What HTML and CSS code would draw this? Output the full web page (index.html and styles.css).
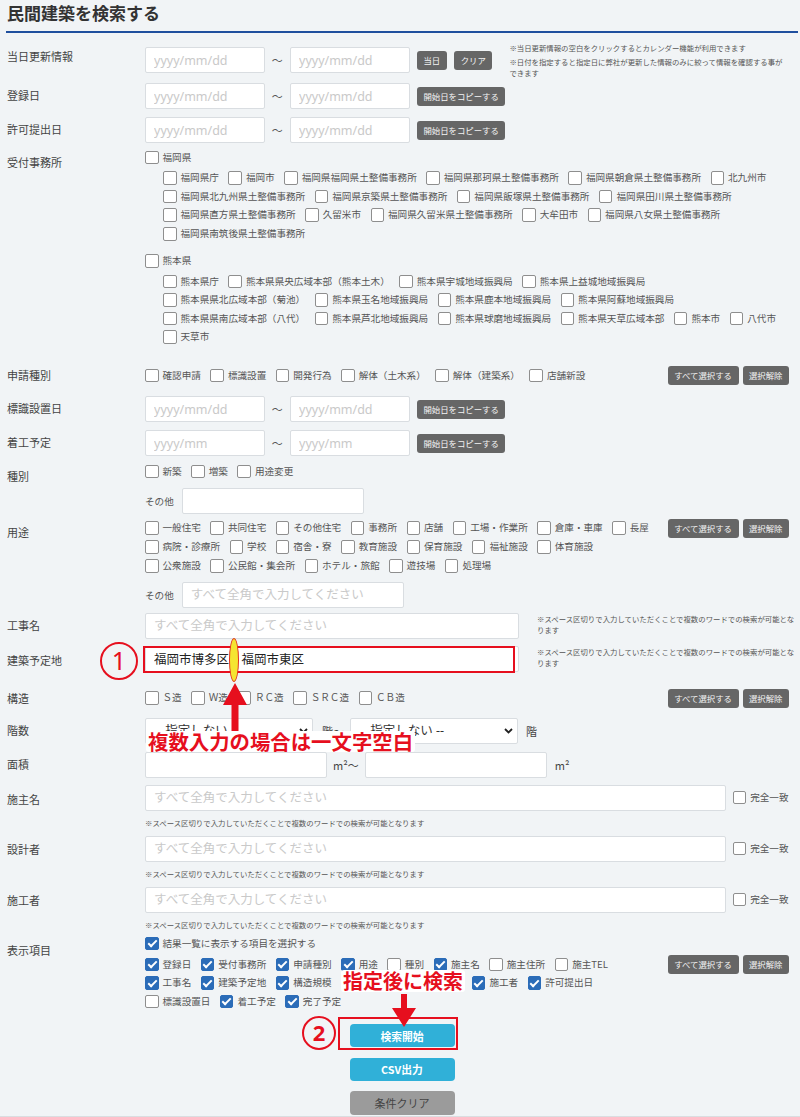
FILE: index.html
```html
<!DOCTYPE html>
<html lang="ja">
<head>
  <meta charset="UTF-8">
  <title>民間建築を検索する</title>
  <link rel="stylesheet" href="styles.css">
</head>
<body>
<div class="page">
  <h1 class="page-title">民間建築を検索する</h1>

  <!-- 当日更新情報 -->
  <div class="row mt-9">
    <div class="lbl pt-2">当日更新情報</div>
    <div class="field">
      <div class="dates mt-5">
        <input class="txt date" placeholder="yyyy/mm/dd">
        <span class="tilde">～</span>
        <input class="txt date" placeholder="yyyy/mm/dd">
        <button class="btn-s">当日</button>
        <button class="btn-s">クリア</button>
      </div>
      <div class="note-top">
        <p>※当日更新情報の空白をクリックするとカレンダー機能が利用できます</p>
        <p>※日付を指定すると指定日に弊社が更新した情報のみに絞って情報を確認する事ができます</p>
      </div>
    </div>
  </div>

  <div class="row mt-5h">
    <div class="lbl">登録日</div>
    <div class="field">
      <div class="dates">
        <input class="txt date" placeholder="yyyy/mm/dd">
        <span class="tilde">～</span>
        <input class="txt date" placeholder="yyyy/mm/dd">
        <button class="btn-s">開始日をコピーする</button>
      </div>
    </div>
  </div>

  <div class="row mt-8">
    <div class="lbl">許可提出日</div>
    <div class="field">
      <div class="dates">
        <input class="txt date" placeholder="yyyy/mm/dd">
        <span class="tilde">～</span>
        <input class="txt date" placeholder="yyyy/mm/dd">
        <button class="btn-s">開始日をコピーする</button>
      </div>
    </div>
  </div>

  <!-- 受付事務所 -->
  <div class="row mt-5h">
    <div class="lbl pt-1h">受付事務所</div>
    <div class="field col">
      <div class="pref">
        <div class="pref-head"><label class="cb"><input type="checkbox">福岡県</label></div>
        <div class="pref-list">
          <label class="cb"><input type="checkbox">福岡県庁</label>
          <label class="cb"><input type="checkbox">福岡市</label>
          <label class="cb"><input type="checkbox">福岡県福岡県土整備事務所</label>
          <label class="cb"><input type="checkbox">福岡県那珂県土整備事務所</label>
          <label class="cb"><input type="checkbox">福岡県朝倉県土整備事務所</label>
          <label class="cb"><input type="checkbox">北九州市</label>
          <label class="cb"><input type="checkbox">福岡県北九州県土整備事務所</label>
          <label class="cb"><input type="checkbox">福岡県京築県土整備事務所</label>
          <label class="cb"><input type="checkbox">福岡県飯塚県土整備事務所</label>
          <label class="cb"><input type="checkbox">福岡県田川県土整備事務所</label>
          <label class="cb"><input type="checkbox">福岡県直方県土整備事務所</label>
          <label class="cb"><input type="checkbox">久留米市</label>
          <label class="cb"><input type="checkbox">福岡県久留米県土整備事務所</label>
          <label class="cb"><input type="checkbox">大牟田市</label>
          <label class="cb"><input type="checkbox">福岡県八女県土整備事務所</label>
          <label class="cb"><input type="checkbox">福岡県南筑後県土整備事務所</label>
        </div>
      </div>
      <div class="pref">
        <div class="pref-head"><label class="cb"><input type="checkbox">熊本県</label></div>
        <div class="pref-list">
          <label class="cb"><input type="checkbox">熊本県庁</label>
          <label class="cb"><input type="checkbox">熊本県県央広域本部（熊本土木）</label>
          <label class="cb"><input type="checkbox">熊本県宇城地域振興局</label>
          <label class="cb"><input type="checkbox">熊本県上益城地域振興局</label>
          <label class="cb"><input type="checkbox">熊本県県北広域本部（菊池）</label>
          <label class="cb"><input type="checkbox">熊本県玉名地域振興局</label>
          <label class="cb"><input type="checkbox">熊本県鹿本地域振興局</label>
          <label class="cb"><input type="checkbox">熊本県阿蘇地域振興局</label>
          <label class="cb"><input type="checkbox">熊本県県南広域本部（八代）</label>
          <label class="cb"><input type="checkbox">熊本県芦北地域振興局</label>
          <label class="cb"><input type="checkbox">熊本県球磨地域振興局</label>
          <label class="cb"><input type="checkbox">熊本県天草広域本部</label>
          <label class="cb"><input type="checkbox">熊本市</label>
          <label class="cb"><input type="checkbox">八代市</label>
          <label class="cb"><input type="checkbox">天草市</label>
        </div>
      </div>
    </div>
  </div>

  <!-- 申請種別 -->
  <div class="row mt-19h">
    <div class="lbl short">申請種別</div>
    <div class="field center">
      <div class="cbs">
        <label class="cb"><input type="checkbox">確認申請</label>
        <label class="cb"><input type="checkbox">標識設置</label>
        <label class="cb"><input type="checkbox">開発行為</label>
        <label class="cb"><input type="checkbox">解体（土木系）</label>
        <label class="cb"><input type="checkbox">解体（建築系）</label>
        <label class="cb"><input type="checkbox">店舗新設</label>
      </div>
      <div class="btns">
        <button class="btn-s">すべて選択する</button>
        <button class="btn-s">選択解除</button>
      </div>
    </div>
  </div>

  <div class="row mt-11">
    <div class="lbl">標識設置日</div>
    <div class="field">
      <div class="dates">
        <input class="txt date" placeholder="yyyy/mm/dd">
        <span class="tilde">～</span>
        <input class="txt date" placeholder="yyyy/mm/dd">
        <button class="btn-s">開始日をコピーする</button>
      </div>
    </div>
  </div>

  <div class="row mt-8">
    <div class="lbl">着工予定</div>
    <div class="field">
      <div class="dates">
        <input class="txt date" placeholder="yyyy/mm">
        <span class="tilde">～</span>
        <input class="txt date" placeholder="yyyy/mm">
        <button class="btn-s">開始日をコピーする</button>
      </div>
    </div>
  </div>

  <!-- 種別 -->
  <div class="row mt-6">
    <div class="lbl pt-2">種別</div>
    <div class="field col">
      <div class="cbs">
        <label class="cb"><input type="checkbox">新築</label>
        <label class="cb"><input type="checkbox">増築</label>
        <label class="cb"><input type="checkbox">用途変更</label>
      </div>
      <div class="other mt-7">
        <span>その他</span>
        <input class="txt other-s">
      </div>
    </div>
  </div>

  <!-- 用途 -->
  <div class="row mt-5">
    <div class="lbl pt-1">用途</div>
    <div class="field col">
      <div class="split">
        <div class="cbs tall">
          <label class="cb"><input type="checkbox">一般住宅</label>
          <label class="cb"><input type="checkbox">共同住宅</label>
          <label class="cb"><input type="checkbox">その他住宅</label>
          <label class="cb"><input type="checkbox">事務所</label>
          <label class="cb"><input type="checkbox">店舗</label>
          <label class="cb"><input type="checkbox">工場・作業所</label>
          <label class="cb"><input type="checkbox">倉庫・車庫</label>
          <label class="cb"><input type="checkbox">長屋</label>
          <label class="cb"><input type="checkbox">病院・診療所</label>
          <label class="cb"><input type="checkbox">学校</label>
          <label class="cb"><input type="checkbox">宿舎・寮</label>
          <label class="cb"><input type="checkbox">教育施設</label>
          <label class="cb"><input type="checkbox">保育施設</label>
          <label class="cb"><input type="checkbox">福祉施設</label>
          <label class="cb"><input type="checkbox">体育施設</label>
          <label class="cb"><input type="checkbox">公衆施設</label>
          <label class="cb"><input type="checkbox">公民館・集会所</label>
          <label class="cb"><input type="checkbox">ホテル・旅館</label>
          <label class="cb"><input type="checkbox">遊技場</label>
          <label class="cb"><input type="checkbox">処理場</label>
        </div>
        <div class="btns">
          <button class="btn-s">すべて選択する</button>
          <button class="btn-s">選択解除</button>
        </div>
      </div>
      <div class="other mt-6">
        <span>その他</span>
        <input class="txt other-l" placeholder="すべて全角で入力してください">
      </div>
    </div>
  </div>

  <!-- 工事名 / 建築予定地 -->
  <div class="row mt-5">
    <div class="lbl">工事名</div>
    <div class="field">
      <input class="txt wide" placeholder="すべて全角で入力してください">
      <p class="note-side">※スペース区切りで入力していただくことで複数のワードでの検索が可能となります</p>
    </div>
  </div>

  <div class="row mt-7">
    <div class="lbl pt-2">建築予定地</div>
    <div class="field">
      <input class="txt wide" value="福岡市博多区　福岡市東区" placeholder="すべて全角で入力してください">
      <p class="note-side">※スペース区切りで入力していただくことで複数のワードでの検索が可能となります</p>
    </div>
  </div>

  <!-- 構造 -->
  <div class="row mt-15">
    <div class="lbl short">構造</div>
    <div class="field center">
      <div class="cbs">
        <label class="cb"><input type="checkbox">Ｓ造</label>
        <label class="cb"><input type="checkbox">Ｗ造</label>
        <label class="cb"><input type="checkbox">ＲＣ造</label>
        <label class="cb"><input type="checkbox">ＳＲＣ造</label>
        <label class="cb"><input type="checkbox">ＣＢ造</label>
      </div>
      <div class="btns">
        <button class="btn-s">すべて選択する</button>
        <button class="btn-s">選択解除</button>
      </div>
    </div>
  </div>

  <!-- 階数 -->
  <div class="row mt-10">
    <div class="lbl">階数</div>
    <div class="field center">
      <div class="sel">
        <select><option>-- 指定しない --</option></select>
        <svg width="9" height="6" viewBox="0 0 9 6"><polyline points="1,1 4.5,4.5 8,1" fill="none" stroke="#222" stroke-width="1.8"/></svg>
      </div>
      <span class="unit u-floor">階～</span>
      <div class="sel">
        <select><option>-- 指定しない --</option></select>
        <svg width="9" height="6" viewBox="0 0 9 6"><polyline points="1,1 4.5,4.5 8,1" fill="none" stroke="#222" stroke-width="1.8"/></svg>
      </div>
      <span class="unit u-end">階</span>
    </div>
  </div>

  <!-- 面積 -->
  <div class="row mt-8">
    <div class="lbl">面積</div>
    <div class="field center">
      <input class="txt area">
      <span class="unit u-area">m²～</span>
      <input class="txt area">
      <span class="unit u-end">m²</span>
    </div>
  </div>

  <!-- 施主名 / 設計者 / 施工者 -->
  <div class="row mt-7">
    <div class="lbl pt-2">施主名</div>
    <div class="field col">
      <div class="line">
        <input class="txt full" placeholder="すべて全角で入力してください">
        <label class="cb exact"><input type="checkbox">完全一致</label>
      </div>
      <p class="note-under">※スペース区切りで入力していただくことで複数のワードでの検索が可能となります</p>
    </div>
  </div>

  <div class="row mt-7h">
    <div class="lbl pt-1">設計者</div>
    <div class="field col">
      <div class="line">
        <input class="txt full" placeholder="すべて全角で入力してください">
        <label class="cb exact"><input type="checkbox">完全一致</label>
      </div>
      <p class="note-under">※スペース区切りで入力していただくことで複数のワードでの検索が可能となります</p>
    </div>
  </div>

  <div class="row mt-7h">
    <div class="lbl pt-1">施工者</div>
    <div class="field col">
      <div class="line">
        <input class="txt full" placeholder="すべて全角で入力してください">
        <label class="cb exact"><input type="checkbox">完全一致</label>
      </div>
      <p class="note-under">※スペース区切りで入力していただくことで複数のワードでの検索が可能となります</p>
    </div>
  </div>

  <!-- 表示項目 -->
  <div class="row mt-4">
    <div class="lbl pt-3h">表示項目</div>
    <div class="field col">
      <label class="cb master"><input type="checkbox" checked>結果一覧に表示する項目を選択する</label>
      <div class="split mt-2">
        <div class="cbs compact">
          <label class="cb"><input type="checkbox" checked>登録日</label>
          <label class="cb"><input type="checkbox" checked>受付事務所</label>
          <label class="cb"><input type="checkbox" checked>申請種別</label>
          <label class="cb"><input type="checkbox" checked>用途</label>
          <label class="cb"><input type="checkbox">種別</label>
          <label class="cb"><input type="checkbox" checked>施主名</label>
          <label class="cb"><input type="checkbox">施主住所</label>
          <label class="cb"><input type="checkbox">施主TEL</label>
          <label class="cb"><input type="checkbox" checked>工事名</label>
          <label class="cb"><input type="checkbox" checked>建築予定地</label>
          <label class="cb"><input type="checkbox" checked>構造規模</label>
          <label class="cb"><input type="checkbox" checked>設計者</label>
          <label class="cb"><input type="checkbox" checked>階数・面積</label>
          <label class="cb"><input type="checkbox" checked>施工者</label>
          <label class="cb"><input type="checkbox" checked>許可提出日</label>
          <label class="cb"><input type="checkbox">標識設置日</label>
          <label class="cb"><input type="checkbox" checked>着工予定</label>
          <label class="cb"><input type="checkbox" checked>完了予定</label>
        </div>
        <div class="btns">
          <button class="btn-s">すべて選択する</button>
          <button class="btn-s">選択解除</button>
        </div>
      </div>
    </div>
  </div>

  <div class="actions">
    <button class="btn-l">検索開始</button>
    <button class="btn-l">CSV出力</button>
    <button class="btn-l gray">条件クリア</button>
  </div>
  <div class="page-end"></div>

  <!-- 注釈 -->
  <div class="mark-circle c1">1</div>
  <div class="mark-box box-addr"></div>
  <div class="mark-oval"></div>
  <svg class="mark-arrow up" width="26" height="48" viewBox="0 0 26 48"><polygon points="13,0 25,22 16.5,22 16.5,48 9.5,48 9.5,22 1,22" fill="#e60f1e"/></svg>
  <div class="mark-text t1">複数入力の場合は一文字空白</div>

  <div class="mark-text t2">指定後に検索</div>
  <svg class="mark-arrow down" width="26" height="34" viewBox="0 0 26 34"><polygon points="10,0 16,0 16,14 25,14 13,33 1,14 10,14" fill="#e60f1e"/></svg>
  <div class="mark-circle c2">2</div>
  <div class="mark-box box-search"></div>
</div>
</body>
</html>
```

FILE: styles.css
```css
html, body { margin:0; padding:0; }
body {
  background:#f1f4f6;
  font-family:"Noto Sans","Noto Sans CJK JP",sans-serif;
  color:#444;
  overflow-x:hidden;
}
.page { position:relative; padding:0 2px 0 6px; }

.page-title {
  margin:0; padding:2px 0 5px 1px;
  font-size:17px; line-height:24px; font-weight:bold; color:#333;
  border-bottom:2px solid #1f4f9e;
}

/* spacing */
.mt-2 { margin-top:2px; }
.mt-4 { margin-top:4px; }
.mt-5 { margin-top:5px; }
.mt-5h { margin-top:5.5px; }
.mt-6 { margin-top:6px; }
.mt-7 { margin-top:7px; }
.mt-7h { margin-top:7.5px; }
.mt-8 { margin-top:8px; }
.mt-9 { margin-top:9px; }
.mt-10 { margin-top:10px; }
.mt-11 { margin-top:11px; }
.mt-15 { margin-top:15px; }
.mt-19h { margin-top:19.5px; }
.pt-1 { padding-top:1px; }
.pt-1h { padding-top:1.5px; }
.pt-2 { padding-top:2px; }
.pt-3h { padding-top:3.5px; }

/* rows */
.row { display:flex; align-items:flex-start; }
.lbl {
  width:138px; padding-left:1px; flex-shrink:0;
  font-size:11px; line-height:26px; color:#444;
}
.lbl.short { line-height:19px; }
.field { flex:1; min-width:0; display:flex; align-items:flex-start; }
.field.col { flex-direction:column; align-items:stretch; }
.field.center { align-items:center; }

/* inputs */
.txt {
  box-sizing:border-box; height:26px; margin:0;
  border:1px solid #d9dde1; border-radius:2px; background:#fff;
  padding:0 8px; font-family:inherit; font-size:12.5px; color:#222;
  outline:none;
}
.txt::placeholder { color:#c9c9c9; }
.date { width:119.5px; }
.other-s { width:182px; }
.other-l { width:222px; }
.wide { width:374px; flex-shrink:0; }
.full { width:583.5px; }
.area { width:182px; }
.dates { display:flex; align-items:center; }
.tilde { width:25.5px; text-align:center; font-size:11px; color:#555; }

/* small dark buttons */
.btn-s {
  height:19px; padding:0 6.5px; margin:0 0 0 7.5px;
  border:none; border-radius:3px; background:#666; color:#f4f4f4;
  font-family:"Noto Sans CJK JP",sans-serif; font-size:8.4px; line-height:19px;
  white-space:nowrap;
}
.btns { display:flex; gap:4px; margin-right:9px; flex-shrink:0; }
.btns .btn-s { margin:0; }

/* notes */
.note-top {
  margin-left:17px; width:278px;
  font-family:"Noto Sans CJK JP",sans-serif; font-size:7.4px; line-height:11px; color:#555;
}
.note-top p { margin:0 0 2.5px; }
.note-top p:last-child { margin:0; }
.note-side {
  margin:1.75px 0 0 18px; width:261px; flex-shrink:0;
  font-family:"Noto Sans CJK JP",sans-serif; font-size:7.4px; line-height:10.5px; color:#555;
}
.note-under {
  margin:6.5px 0 0;
  font-family:"Noto Sans CJK JP",sans-serif; font-size:7.4px; line-height:11px; color:#555;
}

/* checkboxes */
.cb {
  display:flex; align-items:center; margin-right:9.5px;
  font-family:"Noto Sans CJK JP",sans-serif; font-size:9.6px; line-height:1; color:#555;
  white-space:nowrap;
}
.cb input {
  -webkit-appearance:none; appearance:none; position:relative; flex-shrink:0;
  box-sizing:border-box; width:13.5px; height:13.5px; margin:0 4px 0 0;
  border:1px solid #8e8e8e; border-radius:2px; background:#fff;
}
.cb input:checked { background:#2b6cb8; border-color:#2b6cb8; }
.cb input:checked::after {
  content:''; position:absolute; left:3.5px; top:0.5px;
  width:3px; height:7px;
  border:solid #fff; border-width:0 2px 2px 0;
  transform:rotate(45deg);
}
.cbs { flex:1; display:flex; flex-wrap:wrap; margin-right:4px; }
.cbs .cb { height:18.6px; }
.cbs.tall .cb { height:19px; }
.cbs.compact .cb { height:18.5px; }
.master { height:19px; }
.split { display:flex; align-items:flex-start; }

.pref-head { height:18px; display:flex; align-items:center; }
.pref-list { display:flex; flex-wrap:wrap; padding-left:18px; margin-top:2.2px; }
.pref-list .cb { height:18.6px; }
.pref + .pref { margin-top:8.9px; }

.other { display:flex; align-items:center; }
.other span {
  margin-right:8px; font-family:"Noto Sans CJK JP",sans-serif; font-size:9.6px; color:#555;
}

.line { display:flex; align-items:center; }
.exact { margin-left:6.5px; }

/* select + units */
.sel { position:relative; width:168px; height:26px; flex-shrink:0; }
.sel select {
  -webkit-appearance:none; appearance:none;
  box-sizing:border-box; width:100%; height:100%; margin:0;
  border:1px solid #d9dde1; border-radius:2px; background:#fff;
  padding:0 8px; font-family:inherit; font-size:12.5px; color:#333;
}
.sel svg { position:absolute; right:5px; top:10px; pointer-events:none; }
.unit { font-family:"Noto Sans CJK JP",sans-serif; font-size:11px; color:#444; }
.u-floor { margin:0 6px 0 9px; }
.u-area { margin:0 6px; }
.u-end { margin-left:8px; }

/* action buttons */
.actions {
  display:flex; flex-direction:column; align-items:center;
  gap:10.3px; margin-top:13.5px;
}
.btn-l {
  width:105px; height:23.3px; margin:0;
  border:none; border-radius:4px; background:#30b0d8; color:#fff;
  font-family:"Noto Sans CJK JP",sans-serif; font-size:10.8px; font-weight:bold;
}
.btn-l.gray { background:#9b9b9b; color:#444; font-weight:normal; font-size:11px; }
.page-end { margin:1.7px -2px 0 -6px; border-top:1px solid #dadde0; height:2px; }

/* annotations drawn over the form */
.mark-circle {
  position:absolute; box-sizing:border-box;
  border:2.5px solid #e60f1e; border-radius:50%;
  color:#e60f1e; text-align:center;
  font-family:"Noto Sans",sans-serif;
}
.c1 { left:100px; top:642px; width:38px; height:38px; font-size:25px; line-height:33px; }
.c2 { left:302px; top:1016px; width:34px; height:34px; font-size:22px; line-height:29px; font-weight:bold; }
.mark-box { position:absolute; box-sizing:border-box; border:2px solid #e60f1e; }
.box-addr { left:143px; top:645.5px; width:372px; height:27px; }
.box-search { left:338px; top:1017px; width:120px; height:33px; }
.mark-oval {
  position:absolute; left:229px; top:638px; width:10px; height:44px; box-sizing:border-box;
  border:1px solid #e0301e; border-radius:50%; background:#f5e531;
}
.mark-arrow { position:absolute; }
.mark-arrow.up { left:222px; top:683px; }
.mark-arrow.down { left:391px; top:994px; }
.mark-text {
  position:absolute; padding:0 2px; background:#fff; border-radius:3px;
  font-family:"Noto Sans CJK JP",sans-serif; font-weight:bold; color:#e60f1e;
  white-space:nowrap;
}
.t1 { left:146px; top:731px; font-size:20.4px; line-height:21px; }
.t2 { left:341px; top:970px; font-size:20px; line-height:22px; }
```
